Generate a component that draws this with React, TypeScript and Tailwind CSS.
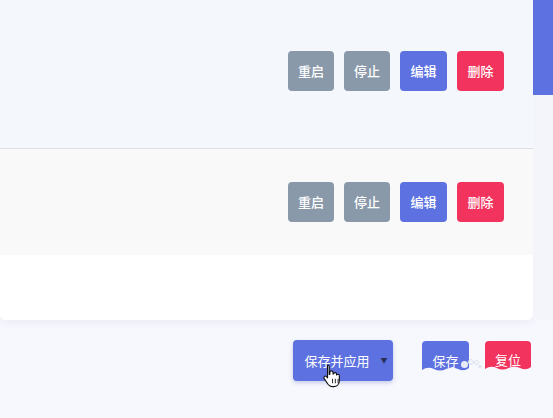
const font = { fontFamily: '"Noto Sans CJK SC", "Noto Sans", sans-serif' }

function RowButtons() {
  return (
    <div className="flex items-center gap-[10px] pr-[29px]">
      <button className="w-[46px] h-[40px] rounded-[4px] bg-[#8a99aa] text-white text-[13px] font-medium">重启</button>
      <button className="w-[46px] h-[40px] rounded-[4px] bg-[#8a99aa] text-white text-[13px] font-medium">停止</button>
      <button className="w-[47px] h-[40px] rounded-[4px] bg-[#5d71e0] text-white text-[13px] font-medium">编辑</button>
      <button className="w-[47px] h-[40px] rounded-[4px] bg-[#f2335d] text-white text-[13px] font-medium">删除</button>
    </div>
  )
}

function Wave({ color }: { color: string }) {
  return (
    <svg className="absolute left-0 bottom-0 w-full h-[8px]" viewBox="0 0 47 8" preserveAspectRatio="none">
      <path d="M0 4 Q6 0 12 3 T24 3 T36 3 T47 2 L47 8 L0 8 Z" fill={color} />
    </svg>
  )
}

function Hand() {
  return (
    <svg className="absolute left-[29px] top-[23px]" width="20" height="25" viewBox="0 0 18 22">
      <path
        d="M5 1.5c.9 0 1.5.6 1.5 1.5v7l.6-.2V8.2c0-.9.6-1.4 1.4-1.4s1.4.5 1.4 1.4v1.4l.5-.1c.2-.7.7-1.1 1.4-1.1.8 0 1.3.5 1.3 1.3v.8c.3-.4.7-.6 1.2-.6.8 0 1.3.6 1.3 1.4v4.2c0 3.2-2 5.5-5.2 5.5H9.2c-1.7 0-2.8-.7-3.8-2.1L2 13.8c-.5-.7-.4-1.5.2-2 .6-.5 1.4-.4 1.9.2l.9 1.1V3c0-.9.1-1.5 0-1.5z"
        fill="#fff"
        stroke="#111"
        strokeWidth="1"
        strokeLinejoin="round"
      />
      <path d="M9.5 14v4M12 14v4M14.5 14v4" stroke="#111" strokeWidth="0.8" />
    </svg>
  )
}

export default function App() {
  return (
    <div className="w-[553px] h-[418px] overflow-hidden bg-[#f7f8fe] flex flex-col" style={font}>
      <div className="flex">
        <div className="w-[533px] rounded-b-[6px] bg-white shadow-[0_2px_8px_rgba(60,70,120,0.08)] overflow-hidden">
          <div className="h-[149px] bg-[#f4f7fc] border-b border-[#dedfe2] flex justify-end items-start pt-[51px]">
            <RowButtons />
          </div>
          <div className="h-[106px] bg-[#f9f9f9] flex justify-end items-center">
            <RowButtons />
          </div>
          <div className="h-[65px] bg-white" />
        </div>
        <div className="w-[20px] bg-[#f3f5fb]">
          <div className="h-[95px] bg-[#5d71e0]" />
        </div>
      </div>

      <div className="flex justify-end items-start pr-[22px] pt-[20px]">
        <div className="relative">
          <button className="w-[100px] h-[41px] rounded-[4px] bg-[#5d71e0] text-white text-[13px] flex items-center justify-center gap-[11px] pl-[6px] shadow-[0_2px_4px_rgba(60,70,160,0.25)]">
            <span>保存并应用</span>
            <span className="text-[#2a2f55] text-[7px]">▼</span>
          </button>
          <Hand />
        </div>
        <div className="relative ml-[29px] mt-[1px]">
          <button className="relative w-[47px] h-[33px] rounded-t-[4px] bg-[#5d71e0] text-white text-[13px] pt-[6px] overflow-hidden">
            保存
            <Wave color="#f7f8fe" />
          </button>
          <span className="absolute left-[39px] top-[20px] w-[7px] h-[7px] rounded-full bg-[#e8ebf7]" />
          <span className="absolute left-[46px] top-[18px] w-[6px] h-[6px] rounded-full border border-[#dfe3f0] bg-[#f2f4fb]" />
          <span className="absolute left-[52px] top-[19px] w-[5px] h-[5px] rounded-full border border-[#e0e4f0] bg-[#f4f6fc]" />
          <span className="absolute left-[56px] top-[24px] w-[4px] h-[3px] rounded-full bg-[#e4e7f3]" />
        </div>
        <div className="relative ml-[16px] mt-[1px]">
          <button className="relative w-[46px] h-[32px] rounded-t-[4px] bg-[#f2335d] text-white text-[13px] pt-[6px] overflow-hidden">
            复位
            <Wave color="#f7f8fe" />
          </button>
        </div>
      </div>
    </div>
  )
}
